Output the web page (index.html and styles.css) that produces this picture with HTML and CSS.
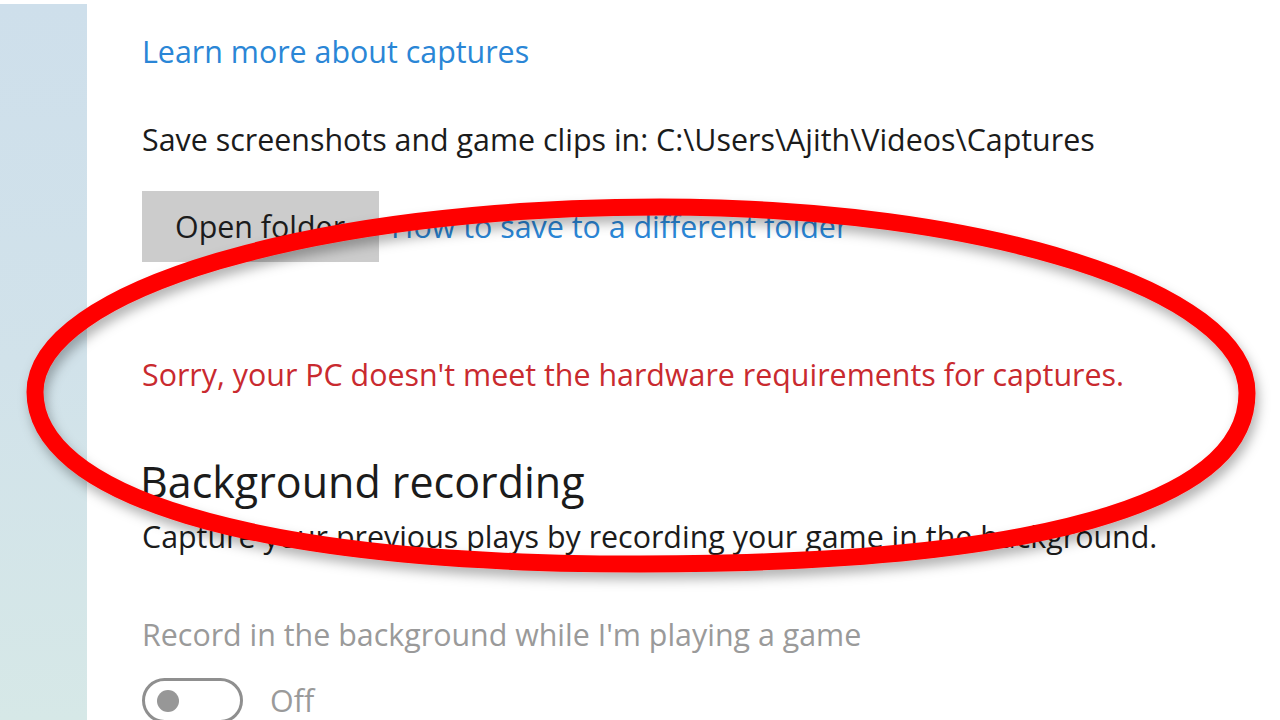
FILE: index.html
```html
<!DOCTYPE html>
<html>
<head>
<meta charset="utf-8">
<link rel="stylesheet" href="styles.css">
</head>
<body>
<div class="page">
  <aside class="side"></aside>
  <main class="main">
    <a class="link learn">Learn more about captures</a>
    <p class="line save">Save screenshots and game clips in: C:\Users\Ajith\Videos\Captures</p>
    <div class="btnrow">
      <button class="btn">Open folder</button>
      <a class="link how">How to save to a different folder</a>
    </div>
    <p class="line sorry">Sorry, your PC doesn't meet the hardware requirements for captures.</p>
    <h2 class="heading">Background recording</h2>
    <p class="line desc">Capture your previous plays by recording your game in the background.</p>
    <p class="line record">Record in the background while I'm playing a game</p>
    <div class="togglerow">
      <span class="toggle"><span class="knob"></span></span>
      <span class="off">Off</span>
    </div>
  </main>
</div>
<svg class="overlay" width="1280" height="720" viewBox="0 0 1280 720">
  <defs>
    <filter id="sh" x="-10%" y="-20%" width="120%" height="140%">
      <feDropShadow dx="3" dy="7" stdDeviation="6" flood-color="#000" flood-opacity="0.3"/>
    </filter>
  </defs>
  <path d="M 35 392 C 35 289.8, 314.8 207, 660 207 C 984.2 207, 1247 290.3, 1247 393 C 1247 504.2, 1034.6 564, 640 564 C 240 564, 35 492, 35 392 Z" fill="none" stroke="#ff0000" stroke-width="17" filter="url(#sh)"/>
</svg>
</body>
</html>
```
FILE: styles.css
```css
html, body {
  margin: 0;
  padding: 0;
  background: #ffffff;
  overflow: hidden;
}
body {
  width: 1280px;
  height: 720px;
  font-family: "Open Sans", "Noto Sans", sans-serif;
  font-size: 30.4px;
  color: #1b1b1b;
}
.page {
  display: flex;
  width: 1280px;
  height: 720px;
}
.side {
  width: 87px;
  flex: none;
  margin-top: 4px;
  background: linear-gradient(180deg, #cedfeb 0%, #d1e2ea 50%, #d6e8e7 100%);
}
.main {
  flex: 1;
  padding-left: 55px;
  display: flex;
  flex-direction: column;
  align-items: flex-start;
}
.link {
  color: #2a86d6;
  text-decoration: none;
}
.learn {
  display: block;
  line-height: 40px;
  margin-top: 32px;
}
.line {
  margin: 0;
  line-height: 40px;
  white-space: nowrap;
}
.save {
  margin-top: 48px;
}
.btnrow {
  display: flex;
  align-items: center;
  margin-top: 31px;
}
.btn {
  font: inherit;
  color: #1b1b1b;
  background: #cccccc;
  border: none;
  width: 237px;
  height: 71px;
  padding: 0 0 0 33px;
  text-align: left;
  white-space: nowrap;
}
.how {
  margin-left: 12px;
  line-height: 40px;
}
.sorry {
  color: #c92a2f;
  margin-top: 93px;
}
.heading {
  margin: 59px 0 0 -2px;
  font-size: 43px;
  font-weight: 400;
  line-height: 56px;
  color: #1b1b1b;
}
.desc {
  margin-top: 7px;
}
.record {
  margin-top: 58px;
  color: #9a9a9a;
}
.togglerow {
  display: flex;
  align-items: center;
  margin-top: 23px;
}
.toggle {
  box-sizing: border-box;
  width: 101px;
  height: 45px;
  border: 3px solid #8f8f8f;
  border-radius: 23px;
  display: flex;
  align-items: center;
  padding-left: 12px;
}
.knob {
  width: 22px;
  height: 22px;
  border-radius: 50%;
  background: #979797;
}
.off {
  margin-left: 27px;
  color: #9a9a9a;
  line-height: 40px;
}
.overlay {
  position: absolute;
  left: 0;
  top: 0;
  pointer-events: none;
}
```
